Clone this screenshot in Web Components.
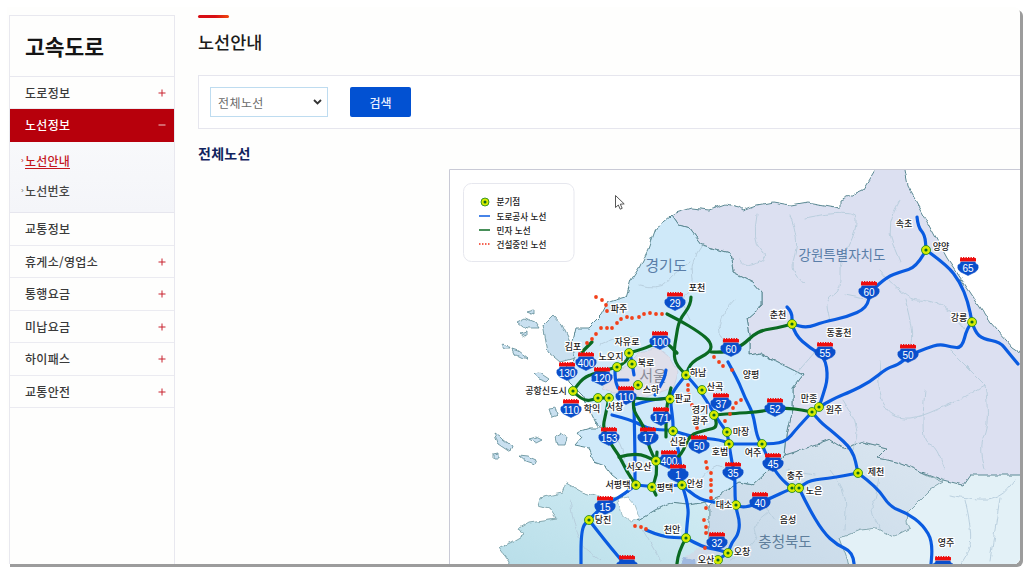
<!DOCTYPE html>
<html lang="ko"><head><meta charset="utf-8"><title>노선안내</title>
<style>
html,body{margin:0;padding:0;background:#fff;height:100%;overflow:hidden}
body{font-family:"Noto Sans CJK KR","Noto Sans",sans-serif}
</style></head><body>
<app-frame>
  <side-nav slot="side" heading="고속도로">
    <nav-item mark="plus">도로정보</nav-item>
    <nav-item mark="minus" active>노선정보</nav-item>
    <sub-menu>
      <sub-item current>노선안내</sub-item>
      <sub-item>노선번호</sub-item>
    </sub-menu>
    <nav-item>교통정보</nav-item>
    <nav-item mark="plus">휴게소/영업소</nav-item>
    <nav-item mark="plus">통행요금</nav-item>
    <nav-item mark="plus">미납요금</nav-item>
    <nav-item mark="plus">하이패스</nav-item>
    <nav-item mark="plus">교통안전</nav-item>
  </side-nav>
  <page-title>노선안내</page-title>
  <search-bar></search-bar>
  <section-title>전체노선</section-title>
  <route-map></route-map>
</app-frame>
<script>
function def(name, html, cls){
  const t=document.createElement('template');t.innerHTML=html;
  customElements.define(name, class extends HTMLElement{
    constructor(){super();this.attachShadow({mode:'open'}).appendChild(t.content.cloneNode(true));if(cls)cls(this);}
  });
}
def('app-frame',`<style>
:host{display:flex;box-sizing:border-box;margin:7px 0 0 7px;width:1013px;height:557px;padding:8px 0 0 2px;background:#fefefd;border-radius:0 6px 6px 0;box-shadow:3px 3px 0 #9c9c9c;overflow:hidden;color:#222}
.main{flex:1;min-width:0;margin-left:23px}
</style><slot name="side"></slot><div class="main"><slot></slot></div>`);

def('side-nav',`<style>
:host{display:flex;flex-direction:column;box-sizing:border-box;flex:none;width:166px;height:620px;border:1px solid #e8e8ef;border-bottom:0}
h1{margin:0;box-sizing:border-box;height:60.500px;padding-left:15px;border-bottom:1px solid #e8e8ef;font:700 21.500px/60px "Noto Sans CJK KR",sans-serif;color:#151515}
</style><h1></h1><slot></slot>`,
el=>{el.shadowRoot.querySelector('h1').textContent=el.getAttribute('heading');});

def('nav-item',`<style>
:host{display:flex;align-items:center;justify-content:space-between;box-sizing:border-box;height:32.500px;padding:1px 8px 0 15px;border-bottom:1px solid #ebebf1;font:500 12px/1 "Noto Sans CJK KR",sans-serif;color:#3a3a3a;letter-spacing:.3px}
:host([active]){background:#b7000c;color:#fff;border-bottom-color:#b7000c}
svg{display:block;flex:none}
</style><span><slot></slot></span><svg width="8" height="8" viewBox="0 0 8 8"></svg>`,
el=>{const m=el.getAttribute('mark'),s=el.shadowRoot.querySelector('svg');
  if(m==='plus')s.innerHTML='<path d="M.5 4h7M4 .5v7" stroke="#c8222e" fill="none"/>';
  if(m==='minus')s.innerHTML='<path d="M.5 4h7" stroke="#f0c8c8" fill="none"/>';});

def('sub-menu',`<style>
:host{display:flex;flex-direction:column;box-sizing:border-box;height:71.500px;padding-top:4px;background:linear-gradient(#f8f9fb,#f4f5f9);border-bottom:1px solid #e6e6ee}
</style><slot></slot>`);

def('sub-item',`<style>
:host{display:flex;align-items:center;box-sizing:border-box;height:30px;padding-left:11px;font:500 12px/1 "Noto Sans CJK KR",sans-serif;color:#444;letter-spacing:.2px}
i{font:normal 8px/1 "Liberation Sans",sans-serif;width:4px;color:#777}
:host([current]){color:#c4161c}
:host([current]) span{text-decoration:underline;text-underline-offset:2px}
:host([current]) i{color:#c4161c}
</style><i>›</i><span><slot></slot></span>`);

def('page-title',`<style>
:host{display:block;box-sizing:border-box;height:60px;font:500 17.500px/1 "Noto Sans CJK KR",sans-serif;color:#1c1c1c}
i{display:block;width:31px;height:3px;border-radius:2px;background:linear-gradient(90deg,#d80e14 55%,#f04a10);margin-bottom:15px}
</style><i></i><slot></slot>`);

def('search-bar',`<style>
:host{display:flex;align-items:center;box-sizing:border-box;height:54px;padding-left:11px;border:1px solid #e6e6ee;border-right:0;gap:22px;background:#fff}
.sel{position:relative;display:block;width:118px;height:30px}
select{appearance:none;-webkit-appearance:none;display:block;box-sizing:border-box;width:100%;height:100%;padding:0 0 0 7px;border:1px solid #bedcf0;border-radius:0;background:#fff;color:#6a6a6a;font:400 12px "Noto Sans CJK KR",sans-serif;letter-spacing:.4px;outline:0}
.sel svg{position:absolute;right:6px;top:12px;pointer-events:none}
button{box-sizing:border-box;width:61px;height:30px;border:0;border-radius:2px;background:#0251d2;color:#e8f0ff;font:500 12px "Noto Sans CJK KR",sans-serif;padding:0}
</style><span class="sel"><select aria-label="노선"><option>전체노선</option></select><svg width="9" height="6" viewBox="0 0 9 6"><path d="M1 1l3.500 3.500L8 1" fill="none" stroke="#333" stroke-width="1.800"/></svg></span><button type="button">검색</button>`);

def('section-title',`<style>
:host{display:block;box-sizing:border-box;height:40px;padding-top:16px;font:700 14px/1.2 "Noto Sans CJK KR",sans-serif;letter-spacing:.3px;color:#11235e}
</style><slot></slot>`);

/* ---------- map ---------- */
const P=s=>s.trim().split(/\s+/).map(p=>p.split(',').map(Number));
const poly=(s,f,st,w)=>`<polygon points="${s}" fill="${f}" stroke="${st||'none'}" stroke-width="${w||0}" stroke-linejoin="round"/>`;
const smooth=s=>{const a=P(s);let d=`M${a[0]}`;
  for(let i=1;i<a.length-1;i++){const m=[(a[i][0]+a[i+1][0])/2,(a[i][1]+a[i+1][1])/2];d+=`Q${a[i]} ${m}`;}
  d+=`L${a[a.length-1]}`;return d;};
const line=(s,c,w)=>`<path d="${smooth(s)}" fill="none" stroke="${c}" stroke-width="${w}" stroke-linecap="round" stroke-linejoin="round"/>`;

const GG="672,215 669,218 656,228 649,248 639,268 631,280 626,297 609,302 602,315 589,328 576,328 572,345 574,360 566,368 569,382 582,395 590,410 596,422 601,428 590,428 577,432 581,437 574,445 589,448 594,462 605,466 612,475 629,488 622,497 639,520 655,510 669,503 689,505 706,502 719,497 730,487 739,482 753,485 767,472 785,455 787,435 793,408 793,388 803,375 777,362 760,353 750,355 750,335 747,318 762,305 762,292 753,282 733,272 730,253 702,245 689,228 679,225";
const GW="672,215 676,213 692,208 709,210 726,204 739,207 743,210 757,205 773,202 790,205 807,202 840,208 840,200 863,190 875,170 877,160 902,160 907,185 920,208 933,232 947,258 970,292 990,322 1013,348 1034,362 1034,475 990,475 970,475 963,485 943,480 917,470 897,462 877,458 887,448 863,442 843,448 830,440 817,445 785,455 787,435 793,408 793,388 803,375 777,362 760,353 750,355 750,335 747,318 762,305 762,292 753,282 733,272 730,253 702,245 689,228 679,225";
const CB="785,455 817,445 830,440 843,448 863,442 887,448 877,458 897,462 917,470 943,482 930,490 908,512 907,522 910,528 893,537 877,528 860,530 840,538 847,558 853,585 708,585 709,535 709,508 719,497 730,487 739,482 753,485 767,472";
const CN="622,497 602,498 582,492 566,483 562,493 539,498 537,505 549,508 556,518 529,522 519,528 524,535 512,542 499,548 509,562 505,585 708,585 709,535 709,508 706,502 689,505 669,503 655,510 639,520";
const SEOUL="626,366 640,352 658,348 668,356 678,372 674,388 660,392 645,398 628,392 612,392 602,388 610,378";

const BLUE=[
"917,217 918,227 925,235 926,250","926,250 947,265 960,282 968,302 972,322","972,322 975,332 983,339 1000,342 1008,352 1018,364",
"972,322 967,328 962,348 951,347 940,344 927,348 910,355 898,365 887,368 870,382 850,392 837,397 819,407",
"926,250 917,267 900,272 887,277 870,292 867,308 847,317 823,322 807,328 792,324","787,307 792,312 792,324",
"792,324 795,335 810,348 825,357 828,378 823,395 819,407","812,412 820,422 833,432 853,450 858,473",
"858,473 877,487 890,507 907,513 923,525 933,542 930,575","812,412 797,428 785,443 762,444 745,444 729,444",
"858,473 833,478 810,480 799,488 792,488 767,500 745,508 736,505","799,488 807,505 823,532 837,545 853,552 855,575",
"762,444 767,458 780,478 792,488","728,362 738,380 745,398 753,413 757,437 762,444",
"686,375 700,390 712,410 720,423 727,432 729,444 732,463 735,475 735,505 740,522 738,535 732,542 728,553",
"686,375 675,388 670,399 673,420 673,431 680,455 682,485","612,415 632,420 646,428 660,430 672,430 692,437 722,440 729,444",
"615,370 615,380 618,388","618,380 628,380","593,380 597,370","634,408 635,448 635,485","634,405 649,400 669,398",
"636,485 652,487 682,485","682,485 696,498 712,502 736,505","682,485 689,505 687,525 686,538",
"686,538 702,547 719,550 728,553","646,530 662,537 686,538","636,485 619,498 606,503 589,520 581,528 581,575","589,520 606,542 628,568",
"719,559 728,553","634,375 631,356 629,353","655,395 664,380 666,370"
];
const GREEN=[
"691,297 691,305 679,320 676,338 674,350 675,363 686,375","667,314 679,320 699,332 711,342 711,352 691,362 686,375","711,352 726,353 743,345 753,335 763,330 777,328 792,324",
"629,353 650,347 660,340 667,343 677,353","617,367 627,362 629,353","617,367 595,373 583,378 573,391","573,391 583,402 598,398 609,398",
"609,398 605,417 603,427 609,442 619,455 627,472 636,485","619,457 636,452 656,461","657,452 656,461 657,475 652,487 656,495",
"634,398 652,400 670,398","634,398 632,408 641,422 646,432 649,448 656,461","671,388 666,405 666,437",
"714,415 740,413 757,412 775,409 787,408 802,410 812,412","714,415 719,427 706,430 689,435 682,455 666,465 656,461","686,538 678,552 676,575","582,352 592,342"
];
const DOTS="596,297 602,300 606,305 607,311 587,343 592,339 596,334 601,328 607,328 612,328 617,323 621,319 627,317 632,318 639,317 644,314 650,313 656,314 662,314 714,357 719,362 723,366 688,385 688,390 689,395 692,405 697,428 706,462 707,468 711,473 711,480 711,485 711,491 711,498 706,508 704,520 706,527 706,533 705,548 732,370 741,400 736,403 733,408 730,414 725,421 635,526 641,527 646,529 866,566 872,566";
const SH="29,675,303 100,660,342 60,731,349 400,586,363 130,567,373 120,602,378 110,626,397 110,571,410 153,609,438 171,661,418 17,648,438 400,669,461 50,699,446 1,678,475 37,721,404 35,733,473 52,775,409 45,773,464 40,760,503 15,605,507 32,717,543 ,627,566 55,825,353 60,869,292 50,908,355 65,968,268 ,943,567";
const NODES="926,250 972,322 792,324 686,375 702,390 629,353 617,367 632,364 638,385 670,399 573,391 598,398 609,398 673,431 714,415 727,432 729,444 762,444 812,412 819,407 656,461 636,485 652,487 682,485 589,520 686,538 736,505 792,488 799,488 858,473 718,560 728,553";
const LABELS="포천,697,288 파주,619,309 김포,573,347 자유로,627,342 노오지,611,357 북로,646,363 공항신도시,546,391 학익,592,409 서창,615,407 스하,651,390 판교,683,399 하남,698,373 산곡,715,387 양평,751,375 경기,700,410 광주,700,421 마장,741,432 호법,720,452 여주,753,453 신갈,678,442 서오산,639,467 서평택,618,485 평택,665,488 안성,695,484 대소,724,505 천안,672,530 오산,706,560 오창,742,552 당진,603,520 춘천,778,315 동홍천,839,333 속초,904,224 양양,941,247 강릉,959,318 만종,809,399 원주,834,410 제천,876,472 충주,795,476 노은,814,491 음성,788,520 영주,946,543";

const INNER=[
"702,245 690,262 695,285 680,300 690,320","640,285 660,290 672,275 690,262","600,345 620,335 640,340","735,300 715,320 725,345","610,430 625,445 622,465 640,470","700,480 715,462 725,470",
"757,215 752,240 770,258 745,268 740,258","790,215 800,240 790,268 805,285","805,218 855,208 857,230 840,262 842,290 825,300 830,320","845,295 870,300","900,200 885,225 900,262","880,270 905,300 930,300 950,310","905,300 915,335 905,355","950,310 965,330",
"880,362 875,395 900,425 960,400 985,385","925,390 920,440 935,445 945,470","985,385 990,420 980,445 985,470","950,350 985,385","843,400 860,425 853,450","815,352 795,375",
"830,470 847,490 845,530","880,470 877,495 870,510 880,528","787,470 815,475","770,510 750,525 760,540 730,560","640,525 660,560","570,500 575,540 600,560","760,498 775,520",
"950,495 975,500 1000,498 1015,480","965,500 975,540 960,565","1000,498 990,560"
];
const IS=["494,432 500,436 504,440 512,446 510,452 504,448 498,444","519,455 528,456 537,460 535,464 526,461","529,439 536,437 542,440 536,443","556,436 561,433 567,437 565,445 558,445","493,454 498,453 498,458 493,458",
"534,374 540,373 549,379 546,382 538,379","549,408 556,407 558,415 552,417","543,325 553,315 562,325 572,345 575,358 560,362 548,352","517,322 525,318 535,322 539,328 528,328 522,326","502,344 507,345 510,349 505,349","512,349 518,351 527,358 522,358 514,354","527,312 534,310 534,315","520,333 526,331 526,336"];

let g='<defs><linearGradient id="cb" x1="0" y1="1" x2="1" y2="0"><stop offset="0" stop-color="#c4d8e8"/><stop offset="1" stop-color="#dbe6f0"/></linearGradient><linearGradient id="cn" x1="0" y1="1" x2="1" y2="0"><stop offset="0" stop-color="#b6dde8"/><stop offset="1" stop-color="#d2ecf4"/></linearGradient>'
 +'<filter id="rough" filterUnits="userSpaceOnUse" x="440" y="150" width="620" height="450"><feTurbulence type="fractalNoise" baseFrequency=".11" numOctaves="2" seed="5" result="n"/><feDisplacementMap in="SourceGraphic" in2="n" scale="5" xChannelSelector="R" yChannelSelector="G"/></filter></defs>';
g+='<rect x="449" y="169" width="600" height="420" fill="#fff"/>';
g+='<g filter="url(#rough)">';
g+=poly("800,470 1040,470 1040,590 800,590","#e3f1f7");
g+=poly(CN,"url(#cn)","#6d959e",.8)+poly(CB,"url(#cb)","#6d959e",.8);
g+=poly("708,540 735,585 680,585 683,560","#cfdbe8")+poly("679,569 684,558 696,560 700,585 678,585","#9fb9e0");
g+=poly(GW,"#dce0f1","#5d8a94",1)+poly(GG,"#cfe9f9","#5d8a94",1)+poly(SEOUL,"#dfdfea","#c4c8d8",.6);
g+=poly("618,500 628,497 635,505 640,518 632,522 622,515","#fff","#7fa5ad",.6);
IS.forEach(s=>g+=poly(s,"#c9e0f0","#5d8a94",.8));
INNER.forEach(s=>g+=line(s,"#b6ccdb",.9));
g+='</g>';
g+=`<g font-family="'Noto Sans CJK KR',sans-serif" font-weight="400" text-anchor="middle" fill="#5a7ea8">
<text x="666" y="271" font-size="15">경기도</text><text x="842" y="260" font-size="13.500">강원특별자치도</text><text x="785" y="547" font-size="14.500" fill="#5f7f9c">충청북도</text><text x="653" y="381" font-size="15" fill="#8b8d99">서울</text></g>`;
BLUE.forEach(s=>g+=line(s,"#0a5be0",3.2));
GREEN.forEach(s=>g+=line(s,"#0a6a22",3.2));
P(DOTS).forEach(p=>g+=`<circle cx="${p[0]}" cy="${p[1]}" r="1.9" fill="#f2401a"/>`);
SH.trim().split(/\s+/).forEach(s=>{const [n,x,y]=s.split(',');g+=`<g transform="translate(${x} ${y})"><path d="M-7.500-10.500h15" stroke="#ee0d0d" stroke-width="1" stroke-dasharray="1.300 1.200"/><rect x="-8" y="-10" width="16" height="3.500" rx=".5" fill="#ee0d0d"/><path d="M-7-6H7Q8-3 10-3 11.500 3 4 5.500L0 7.500-4 5.500Q-11.500 3-10-3-8-3-7-6Z" fill="#0a4fcb" stroke="#0a4fcb" stroke-width=".6"/>${n?`<text y="3.500" text-anchor="middle" font-family="'Liberation Sans',sans-serif" font-size="10" fill="#fff">${n}</text>`:''}</g>`;});
P(NODES).forEach(p=>g+=`<circle cx="${p[0]}" cy="${p[1]}" r="4.500" fill="#d6ec00" stroke="#12801e" stroke-width=".8"/><circle cx="${p[0]}" cy="${p[1]}" r="1.600" fill="#0d6a1c"/>`);
g+=`<g font-family="'Noto Sans CJK KR',sans-serif" font-size="9" font-weight="500" text-anchor="middle" fill="#1a1a1a" stroke="#fff" stroke-width="2.400" paint-order="stroke" stroke-linejoin="round">`;
LABELS.split(' ').forEach(s=>{const [t,x,y]=s.split(',');g+=`<text x="${x}" y="${+y+3}">${t}</text>`;});
g+='</g>';
/* legend */
g+=`<rect x="463.500" y="183.500" width="110.500" height="78" rx="8" fill="#fff" stroke="#e6e7ee"/>
<circle cx="485" cy="202" r="4" fill="#d6ec00" stroke="#12801e" stroke-width=".8"/><circle cx="485" cy="202" r="1.500" fill="#0d6a1c"/>
<path d="M479 216h11" stroke="#0a5be0" stroke-width="1.600"/><path d="M479 230h11" stroke="#0a6a22" stroke-width="1.600"/><path d="M479 244h11" stroke="#f2301a" stroke-width="1.600" stroke-dasharray="1.500 1.500"/>
<g font-family="'Noto Sans CJK KR',sans-serif" font-size="8.600" font-weight="500" fill="#222"><text x="496.500" y="205">분기점</text><text x="496.500" y="219.500">도로공사 노선</text><text x="496.500" y="233.500">민자 노선</text><text x="496.500" y="247.500">건설중인 노선</text></g>`;
/* frame of the picture */
g+=`<path d="M449.500 590V169.500H1050" fill="none" stroke="#c9cad6"/>`;
/* cursor */
g+=`<path d="M615.500 195.500v12l2.800-2.500 1.900 4.200 2-.9-1.900-4.100 3.900-.3z" fill="#fff" stroke="#444" stroke-width=".9" stroke-linejoin="round"/>`;

def('route-map',`<style>
:host{display:block;margin-left:251px;width:600px;height:420px}
svg{display:block}
</style><svg xmlns="http://www.w3.org/2000/svg" width="600" height="420" viewBox="449 169 600 420">${g}</svg>`);
</script>
</body></html>
